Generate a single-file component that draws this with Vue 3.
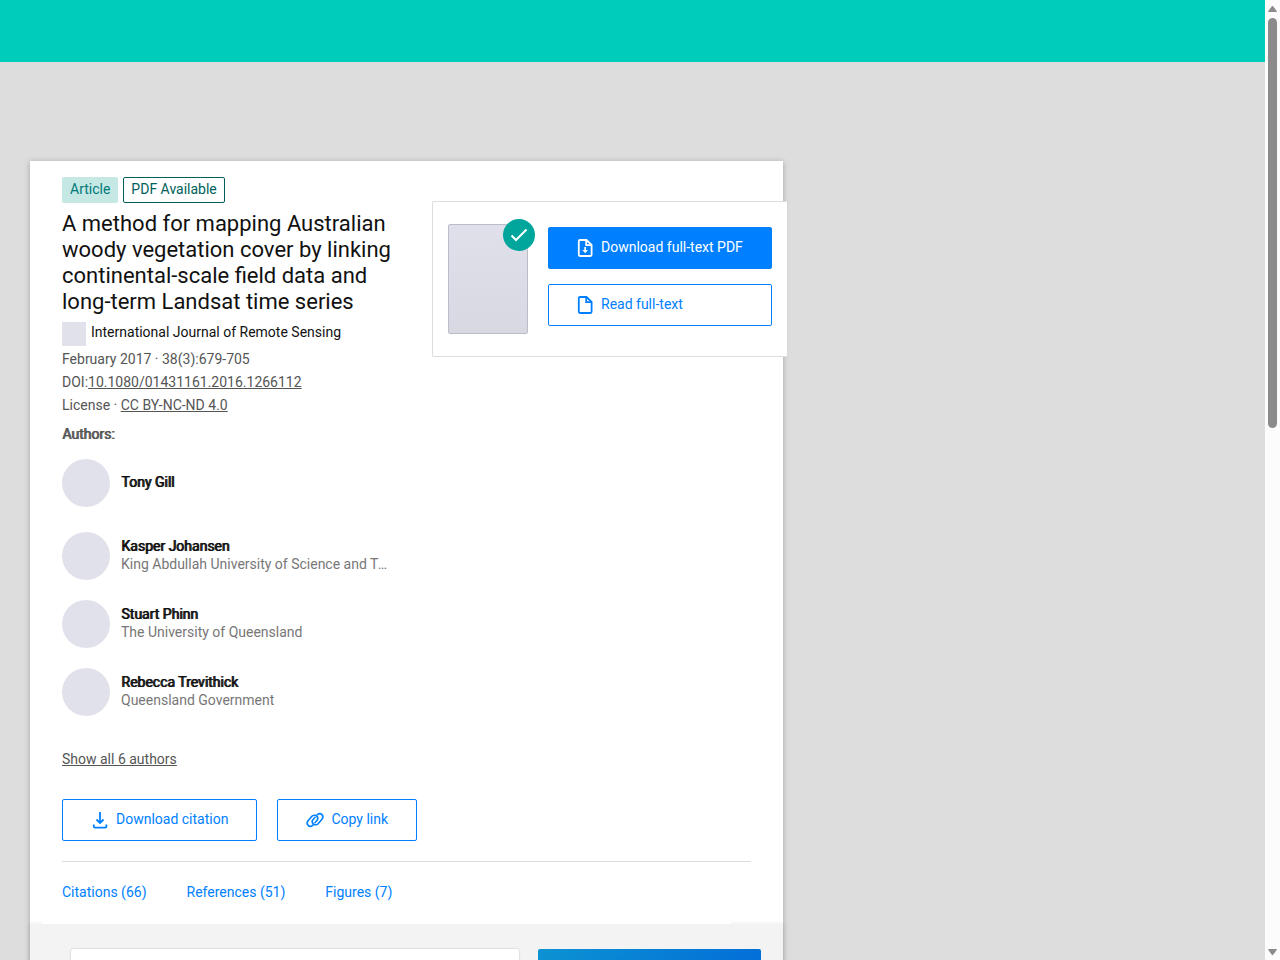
<script setup>
import {ref} from "vue";

const title =
	"A method for mapping Australian woody vegetation cover by linking continental-scale field data and long-term Landsat time series";

const authors = ref([
	{name: "Tony Gill", org: ""},
	{
		name: "Kasper Johansen",
		org: "King Abdullah University of Science and Technology",
	},
	{name: "Stuart Phinn", org: "The University of Queensland"},
	{name: "Rebecca Trevithick", org: "Queensland Government"},
]);

const tabs = [
	{label: "Citations", count: 66},
	{label: "References", count: 51},
	{label: "Figures", count: 7},
];
</script>

<template>
	<div class="shell">
		<div class="page">
			<header class="top-bar"></header>

			<main class="card">
				<div class="summary">
					<section class="details">
						<div class="badges">
							<span class="badge badge-type">Article</span>
							<span class="badge badge-pdf">PDF Available</span>
						</div>
						<h1>{{ title }}</h1>
						<div class="journal">
							<span class="journal-cover"></span>
							<span>International Journal of Remote Sensing</span>
						</div>
						<ul class="meta">
							<li>February 2017 · 38(3):679-705</li>
							<li>DOI:<a href="#">10.1080/01431161.2016.1266112</a></li>
							<li>License · <a href="#">CC BY-NC-ND 4.0</a></li>
						</ul>
						<h2>Authors:</h2>
						<ul class="authors">
							<li v-for="author in authors" :key="author.name">
								<span class="avatar"></span>
								<div class="author-text">
									<div class="author-name">{{ author.name }}</div>
									<div v-if="author.org" class="author-org">
										{{ author.org }}
									</div>
								</div>
							</li>
						</ul>
					</section>

					<aside class="full-text">
						<div class="cover">
							<span class="cover-check">
								<svg viewBox="0 0 32 32" width="32" height="32">
									<path d="M8.500 16.500l4.500 4.500L23.500 10.500" />
								</svg>
							</span>
						</div>
						<div class="full-text-actions">
							<button type="button" class="btn btn-primary">
								<svg class="icon" viewBox="0 0 20 20">
									<path d="M11.500 2H5q-1.200 0-1.200 1.200v13.600q0 1.200 1.200 1.200h10.400q1.200 0 1.200-1.200V7z" />
									<path d="M11.200 2.500V7.200h5" />
									<path class="solid" d="M9.300 9h1.700v3h2l-2.800 3.200L7.400 12h1.900z" />
								</svg>
								Download full-text PDF
							</button>
							<button type="button" class="btn">
								<svg class="icon" viewBox="0 0 20 20">
									<path d="M11.500 2H5q-1.200 0-1.200 1.200v13.600q0 1.200 1.200 1.200h10.400q1.200 0 1.200-1.200V7z" />
									<path d="M11.200 2.500V7.200h5" />
								</svg>
								Read full-text
							</button>
						</div>
					</aside>
				</div>

				<a class="show-all" href="#">Show all 6 authors</a>

				<div class="actions">
					<button type="button" class="btn">
						<svg class="icon" viewBox="0 0 20 20">
							<path d="M10 2v11M6.500 9.500L10 13l3.500-3.500" />
							<path d="M3.800 14.500v2q0 1.200 1.200 1.200h10.200q1.200 0 1.200-1.200v-2" />
						</svg>
						Download citation
					</button>
					<button type="button" class="btn">
						<svg class="icon" viewBox="-1.500 -1.500 23 23">
							<path d="M8 15.600l-1 .8a3.700 3.700 0 0 1-5.200-5.200L6.400 5.800a3.900 3.900 0 0 1 5.700-.2c1.500 1.500 1.300 3.700-.1 5.200l-2.400 2.600" />
							<path d="M12 4.400l1-.8a3.700 3.700 0 0 1 5.200 5.200l-4.600 5.400a3.900 3.900 0 0 1-5.700.2c-1.500-1.500-1.300-3.700.1-5.200l2.400-2.600" />
						</svg>
						Copy link
					</button>
				</div>

				<nav class="tabs">
					<a v-for="tab in tabs" :key="tab.label" href="#"
						>{{ tab.label }} ({{ tab.count }})</a
					>
				</nav>

				<section class="content">
					<div class="panel"></div>
					<div class="promo"></div>
				</section>
			</main>
		</div>

		<div class="scrollbar">
			<svg viewBox="0 0 15 18" width="15" height="18">
				<path d="M7.500 6L11.500 11.500h-8z" />
			</svg>
			<div class="thumb"></div>
			<svg class="arrow-down" viewBox="0 0 15 18" width="15" height="18">
				<path d="M7.500 13L11.500 7.500h-8z" />
			</svg>
		</div>
	</div>
</template>

<style>
body {
	margin: 0;
	overflow: hidden;
}
</style>

<style scoped>
* {
	box-sizing: border-box;
}

.shell {
	display: flex;
	height: 100vh;
	overflow: hidden;
	font-family: Roboto, "Liberation Sans", sans-serif;
	font-size: 14px;
	line-height: 18px;
	color: #111;
}

.page {
	flex: 1;
	overflow: hidden;
	background: #ddd;
}

.top-bar {
	height: 62px;
	background: #00ccbb;
}

.card {
	max-width: 753px;
	margin: 99px 30px 0;
	padding-top: 16px;
	background: #fff;
	box-shadow: 0 1px 6px rgba(0, 0, 0, 0.25);
}

.summary {
	display: grid;
	grid-template-columns: 1fr 355px;
	gap: 40px;
	align-items: start;
	margin: 0 -4px 0 32px;
}

.details {
	min-width: 0;
}

.badges {
	display: flex;
	gap: 5px;
}

.badge {
	height: 26px;
	padding: 0 7px;
	border: 1px solid transparent;
	border-radius: 2px;
	line-height: 22px;
}

.badge-type {
	background: #c5e8e4;
	color: #00797a;
}

.badge-pdf {
	border-color: #005f5a;
	color: #005f5a;
}

h1 {
	margin: 8px 0 7px;
	font-size: 22px;
	font-weight: 400;
	line-height: 26px;
}

.journal {
	display: flex;
	gap: 5px;
	height: 24px;
	line-height: 20px;
}

.journal-cover {
	width: 24px;
	height: 24px;
	background: #e1e1eb;
}

ul {
	margin: 0;
	padding: 0;
	list-style: none;
}

.meta {
	margin-top: 2px;
	line-height: 23px;
	color: #555;
}

.meta a,
.show-all {
	color: #555;
	text-decoration: underline;
}

h2 {
	margin: 8px 0 16px;
	font-size: 14px;
	line-height: 18px;
	color: #555;
}

h2,
.author-name {
	font-weight: 400;
	text-shadow: 1px 0 currentColor;
}

.authors li {
	display: flex;
	align-items: center;
	gap: 11px;
	height: 48px;
	margin-bottom: 20px;
}

.authors li:first-child {
	margin-bottom: 25px;
}

.avatar {
	flex: none;
	width: 48px;
	height: 48px;
	border-radius: 50%;
	background: #e1e1eb;
}

.author-text {
	min-width: 0;
	max-width: 270px;
	padding-bottom: 2px;
}

.author-org {
	overflow: hidden;
	white-space: nowrap;
	text-overflow: ellipsis;
	color: #777;
}

.full-text {
	display: flex;
	gap: 20px;
	height: 156px;
	margin-top: 24px;
	padding: 22px 15px;
	border: 1px solid #ddd;
	border-right: 0;
	border-radius: 2px 0 0 2px;
	background: #fff;
}

.cover {
	position: relative;
	flex: none;
	width: 80px;
	height: 110px;
	border: 1px solid #bcbcc8;
	border-radius: 2px;
	background: linear-gradient(#e0e0ea, #d8d8e2);
}

.cover-check {
	position: absolute;
	top: -6px;
	right: -8px;
	width: 32px;
	height: 32px;
	border-radius: 50%;
	background: #00a69c;
}

.cover-check svg {
	display: block;
	fill: none;
	stroke: #fff;
	stroke-width: 2;
}

.full-text-actions {
	display: flex;
	flex: 1;
	flex-direction: column;
	gap: 15px;
	padding-top: 3px;
}

.btn {
	display: flex;
	gap: 6px;
	height: 42px;
	padding: 0 28px 0 27px;
	border: 1px solid #0080ff;
	border-radius: 2px;
	background: #fff;
	font: inherit;
	line-height: 38px;
	white-space: nowrap;
	color: #0080ff;
	cursor: pointer;
}

.full-text-actions .btn {
	padding: 0 0 0 26px;
}

.btn-primary {
	background: #0080ff;
	color: #fff;
}

.icon {
	flex: none;
	width: 20px;
	height: 20px;
	margin-top: 10px;
	fill: none;
	stroke: currentColor;
	stroke-width: 1.8;
}

.icon .solid {
	fill: currentColor;
	stroke: none;
}

.show-all {
	display: inline-block;
	margin: 14px 32px 0;
}

.actions {
	display: flex;
	gap: 20px;
	margin: 31px 32px 20px;
}

.tabs {
	position: relative;
	z-index: 1;
	display: flex;
	gap: 40px;
	height: 63px;
	margin: 0 52px 0 12px;
	padding: 22px 0 0 20px;
	background: #fff;
}

/* Divider reaches past the tab strip to the card's inner edge */
.tabs::before {
	content: "";
	position: absolute;
	top: 0;
	left: 20px;
	right: -20px;
	height: 1px;
	background: #ddd;
}

.tabs a {
	color: #0080ff;
	text-decoration: none;
}

.content {
	display: grid;
	grid-template-columns: 1fr 223px;
	gap: 19px;
	min-height: 400px;
	padding: 25px 22px 0 41px;
	background: #f3f3f3;
	box-shadow: 0 0 4px rgba(0, 0, 0, 0.1);
}

.panel {
	border-radius: 2px;
	background: #fff;
	box-shadow: 0 0 2px rgba(0, 0, 0, 0.25);
}

.promo {
	height: 250px;
	border-radius: 2px;
	background: linear-gradient(135deg, #0d93d2, #0066d9 60%);
}

.scrollbar {
	display: flex;
	flex: none;
	flex-direction: column;
	width: 15px;
	background: #fcfcfc;
}

.scrollbar svg {
	display: block;
	fill: #8b8b8b;
	stroke: #8b8b8b;
	stroke-linejoin: round;
}

.thumb {
	width: 9px;
	height: 410px;
	margin-left: 3px;
	border-radius: 5px;
	background: #8b8b8b;
}

.arrow-down {
	margin-top: auto;
}
</style>
